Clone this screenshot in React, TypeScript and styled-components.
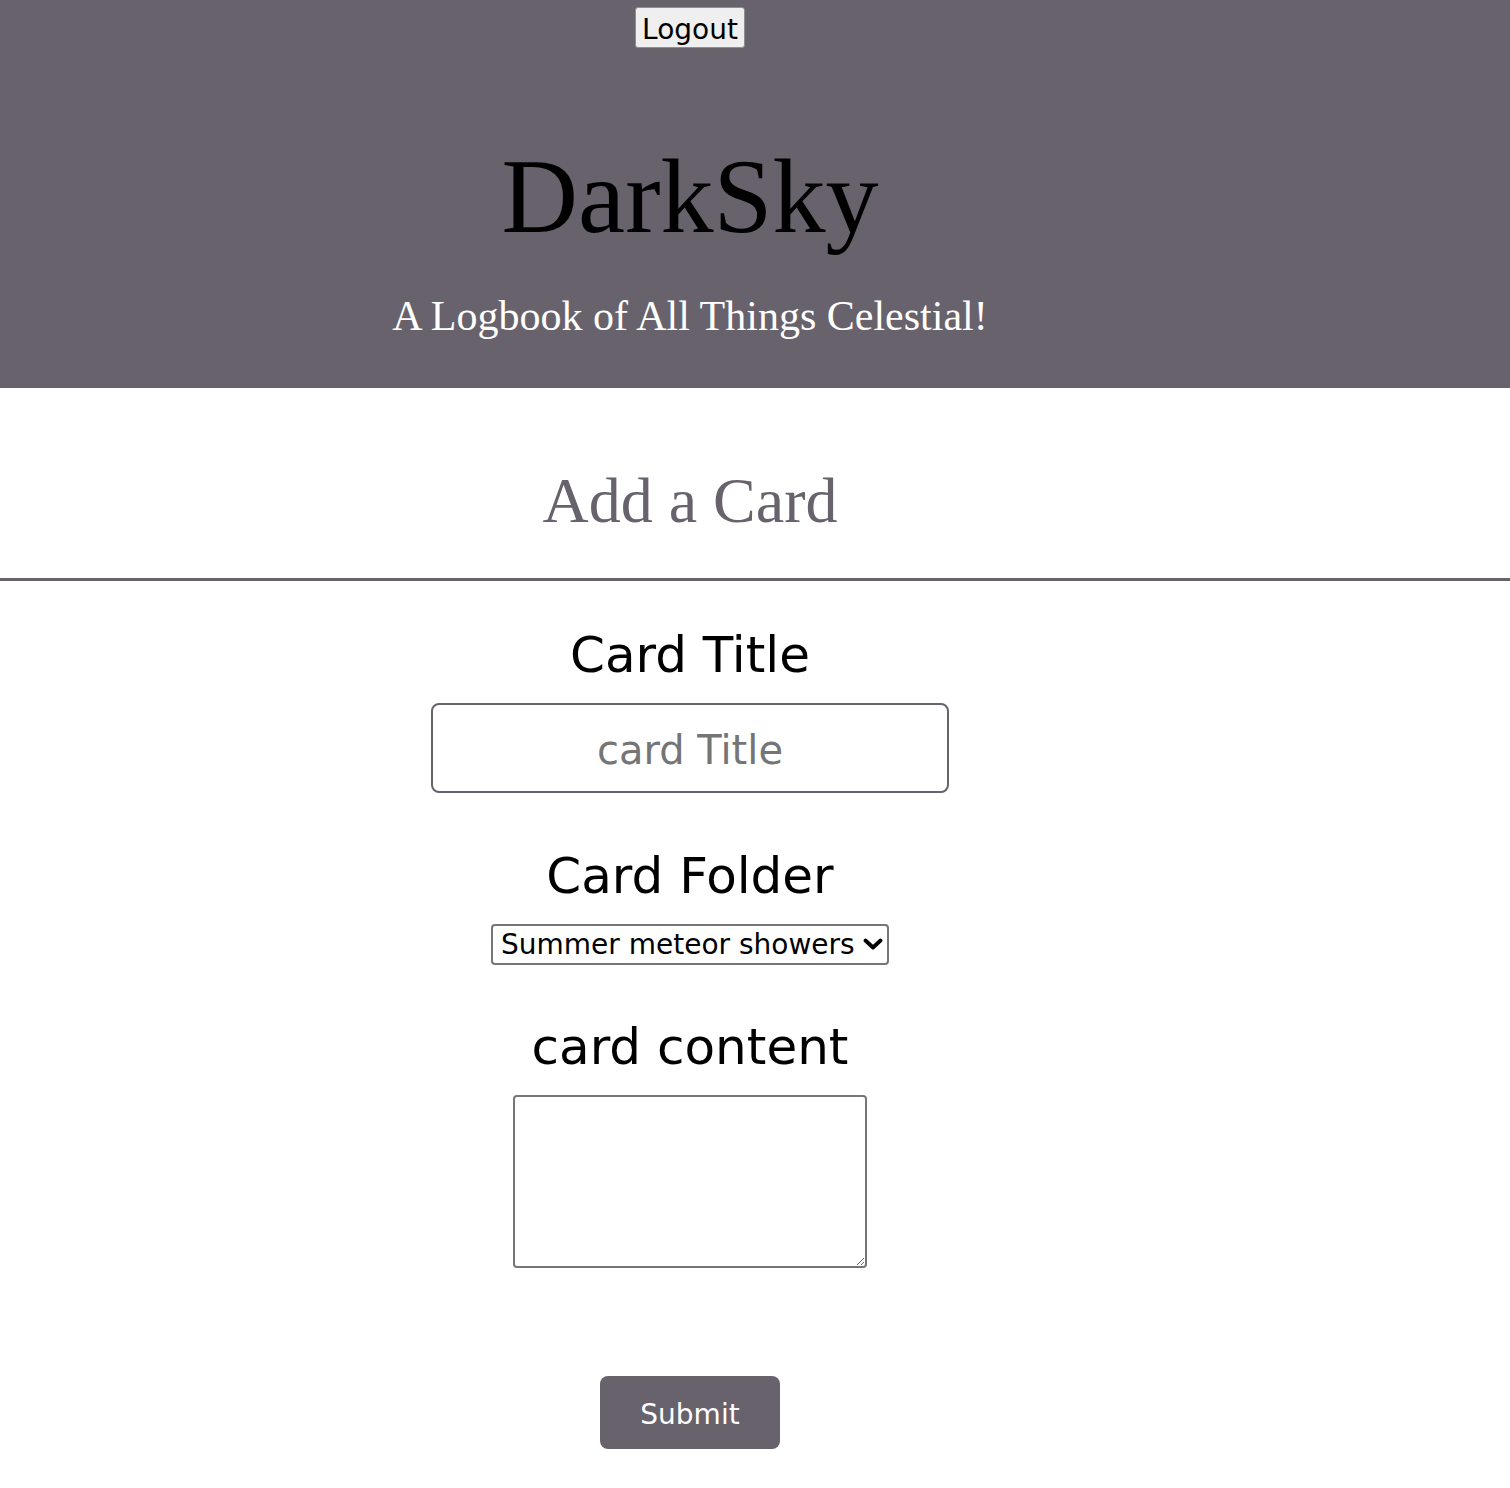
import React from "react";
import styled, { createGlobalStyle } from "styled-components";

const GlobalStyle = createGlobalStyle`
  html, body {
    margin: 0;
    padding: 0;
    background: #ffffff;
  }
  body {
    font-family: "DejaVu Sans", Verdana, sans-serif;
  }
`;

const ACCENT = "#67626c";

const Header = styled.header`
  background: ${ACCENT};
  width: 100%;
  padding: 7px 0 51px;
  box-sizing: border-box;
`;

const Column = styled.div`
  width: 1380px;
  display: flex;
  flex-direction: column;
  align-items: center;
  text-align: center;
`;

const LogoutButton = styled.button`
  font-family: "DejaVu Sans", Verdana, sans-serif;
  font-size: 28px;
  line-height: 33px;
  height: 41px;
  padding: 3px 6px 0;
  color: #000;
  background: #efefef;
  border: 1px solid #8f8f8f;
  border-radius: 3px;
  cursor: pointer;
`;

const Title = styled.h1`
  font-family: Georgia, "Liberation Serif", serif;
  font-weight: normal;
  font-size: 106px;
  line-height: 1;
  margin: 96px 0 0;
  color: #000;
`;

const Subtitle = styled.p`
  font-family: Georgia, "Liberation Serif", serif;
  font-size: 42px;
  line-height: 1;
  margin: 45px 0 0;
  color: #ffffff;
`;

const PageHeading = styled.h2`
  font-family: Georgia, "Liberation Serif", serif;
  font-weight: normal;
  font-size: 64px;
  line-height: 1;
  color: ${ACCENT};
  margin: 0;
  padding: 81px 0 45px;
`;

const Divider = styled.hr`
  margin: 0;
  border: none;
  border-top: 3px solid ${ACCENT};
  width: 100%;
`;

const Form = styled.form`
  width: 1380px;
  display: flex;
  flex-direction: column;
  align-items: center;
  padding-top: 45px;
  padding-bottom: 38px;
`;

const Label = styled.label<{ $gap?: number }>`
  display: block;
  font-family: "DejaVu Sans", Verdana, sans-serif;
  font-size: 50px;
  line-height: 58px;
  color: #000;
  margin-top: ${(p) => p.$gap ?? 0}px;
  margin-bottom: 19px;
`;

const TextInput = styled.input`
  box-sizing: border-box;
  width: 518px;
  height: 90px;
  border: 2px solid ${ACCENT};
  border-radius: 8px;
  font-family: "DejaVu Sans", Verdana, sans-serif;
  font-size: 40px;
  text-align: center;
  padding: 3px 10px 0;
  outline: none;
  &::placeholder {
    color: #757575;
  }
`;

const SelectWrap = styled.div`
  position: relative;
  width: 398px;
  height: 41px;
`;

const Select = styled.select`
  appearance: none;
  -webkit-appearance: none;
  box-sizing: border-box;
  width: 100%;
  height: 100%;
  font-family: "DejaVu Sans", Verdana, sans-serif;
  font-size: 28px;
  color: #000;
  background: #fff;
  border: 2px solid #767676;
  border-radius: 4px;
  padding: 0 30px 0 8px;
`;

const Chevron = styled.svg`
  position: absolute;
  right: 6px;
  top: 14px;
  width: 20px;
  height: 12px;
  pointer-events: none;
`;

const TextArea = styled.textarea`
  box-sizing: border-box;
  width: 354px;
  height: 173px;
  border: 2px solid #767676;
  border-radius: 4px;
  font-family: "DejaVu Sans", Verdana, sans-serif;
  font-size: 16px;
  padding: 4px;
`;

const SubmitButton = styled.button`
  margin-top: 108px;
  width: 180px;
  height: 73px;
  padding: 3px 0 0;
  background: ${ACCENT};
  color: #ffffff;
  border: none;
  border-radius: 8px;
  font-family: "DejaVu Sans", Verdana, sans-serif;
  font-size: 28px;
  cursor: pointer;
`;

export default function App() {
  return (
    <>
      <GlobalStyle />
      <Header>
        <Column>
          <LogoutButton type="button">Logout</LogoutButton>
          <Title>DarkSky</Title>
          <Subtitle>A Logbook of All Things Celestial!</Subtitle>
        </Column>
      </Header>
      <Column>
        <PageHeading>Add a Card</PageHeading>
      </Column>
      <Divider />
      <Form onSubmit={(e) => e.preventDefault()}>
        <Label htmlFor="title">Card Title</Label>
        <TextInput id="title" type="text" placeholder="card Title" />
        <Label htmlFor="folder" $gap={54}>
          Card Folder
        </Label>
        <SelectWrap>
          <Select id="folder" defaultValue="summer">
            <option value="summer">Summer meteor showers</option>
            <option value="winter">Winter constellations</option>
          </Select>
          <Chevron viewBox="0 0 20 12" aria-hidden="true">
            <path
              d="M2.5 2.5 L10 9.5 L17.5 2.5"
              fill="none"
              stroke="#000"
              strokeWidth="3.8"
              strokeLinecap="round"
              strokeLinejoin="round"
            />
          </Chevron>
        </SelectWrap>
        <Label htmlFor="content" $gap={53}>
          card content
        </Label>
        <TextArea id="content" />
        <SubmitButton type="submit">Submit</SubmitButton>
      </Form>
    </>
  );
}
